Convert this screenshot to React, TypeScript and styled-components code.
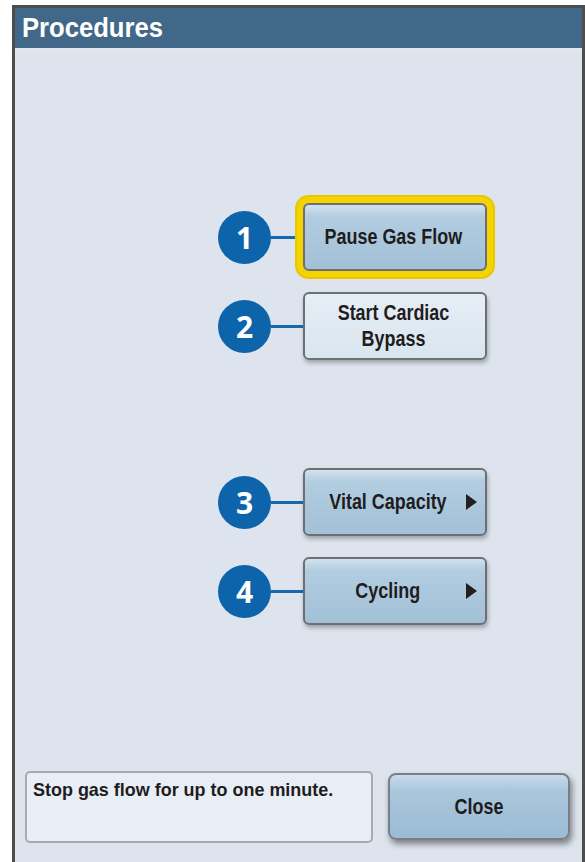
import React from 'react'
import styled, { createGlobalStyle } from 'styled-components'

const GlobalStyle = createGlobalStyle`
  html, body {
    margin: 0;
    padding: 0;
    background: #ffffff;
    overflow: hidden;
  }
  body {
    font-family: "Liberation Sans", Arial, sans-serif;
  }
`

// the device font is a condensed helvetica, squeeze liberation sans to match
const Condensed = styled.span<{ $scale: number }>`
  display: inline-block;
  transform: scaleX(${({ $scale }) => $scale});
  transform-origin: ${({ $scale }) => ($scale > 0.9 ? 'left center' : 'center center')};
  white-space: nowrap;
`

const Frame = styled.div`
  margin: 5px 0 0 12px;
  width: 573px;
  height: 880px;
  box-sizing: border-box;
  border: 3px solid #4d4d4d;
  border-bottom: none;
  background: #dde4ed;
  display: flex;
  flex-direction: column;
`

const Header = styled.div`
  height: 43px;
  box-sizing: border-box;
  background: #426889;
  border-bottom: 3px solid #e3e7ec;
  display: flex;
  align-items: center;
  padding: 0 0 0 7px;
  color: #ffffff;
  font-size: 28px;
  font-weight: 700;
`

const Content = styled.div`
  display: flex;
  flex-direction: column;
  padding: 152px 0 0 203px;
`

const Row = styled.div<{ $gap: number }>`
  display: flex;
  align-items: center;
  margin-top: ${({ $gap }) => $gap}px;
`

const Badge = styled.div`
  width: 53px;
  height: 53px;
  border-radius: 50%;
  background: #0d64ab;
  color: #ffffff;
  display: flex;
  align-items: center;
  justify-content: center;
  font-family: "Open Sans", "Liberation Sans", sans-serif;
  font-size: 30px;
  font-weight: 700;
  flex-shrink: 0;
`

const Connector = styled.div`
  width: 32px;
  height: 3px;
  background: #1769ad;
  flex-shrink: 0;
`

const OptionButton = styled.button<{ $active?: boolean; $light?: boolean }>`
  width: 184px;
  height: 68px;
  box-sizing: border-box;
  border: 2px solid #6d6f72;
  border-radius: 6px;
  padding: 0 8px 0 4px;
  display: flex;
  align-items: center;
  background: ${({ $light }) =>
    $light
      ? 'linear-gradient(#e6eef5, #d9e5ef)'
      : 'linear-gradient(#d2e2ee 0%, #b2cde0 18%, #a2c0d7 100%)'};
  box-shadow: ${({ $active }) =>
    $active
      ? '0 0 0 6px #f4d300, 0 0 0 8px #e8c600'
      : '1px 3px 4px rgba(0, 0, 0, 0.28)'};
  color: #1f1c1d;
  font-family: inherit;
  font-size: 22px;
  font-weight: 700;
  line-height: 26px;
  cursor: pointer;
`

const Label = styled.span`
  flex: 1;
  text-align: center;
`

const Arrow = styled.span`
  width: 0;
  height: 0;
  border-top: 8.5px solid transparent;
  border-bottom: 8.5px solid transparent;
  border-left: 11px solid #231f20;
  flex-shrink: 0;
`

const Footer = styled.div`
  display: flex;
  align-items: flex-start;
  gap: 15px;
  margin-top: 146px;
  padding-left: 10px;
`

const Description = styled.div`
  width: 348px;
  height: 72px;
  box-sizing: border-box;
  border: 2px solid #a7abaf;
  border-radius: 5px;
  background: #e8eef5;
  padding: 6px 6px;
  color: #1f1c1d;
  font-size: 19px;
  font-weight: 700;
  line-height: 22px;
`

const CloseButton = styled.button`
  width: 182px;
  height: 67px;
  margin-top: 2px;
  box-sizing: border-box;
  border: 2px solid #7b7f84;
  border-radius: 8px;
  background: linear-gradient(#c8dcea 0%, #a9c6dc 25%, #9bbcd5 100%);
  box-shadow: 2px 4px 6px rgba(0, 0, 0, 0.45);
  color: #1f1c1d;
  font-family: inherit;
  font-size: 22px;
  font-weight: 700;
  padding: 0;
  cursor: pointer;
`

interface Option {
  num: number
  label: React.ReactNode
  gap: number
  active?: boolean
  light?: boolean
  submenu?: boolean
}

const options: Option[] = [
  { num: 1, label: 'Pause Gas Flow', gap: 0, active: true },
  { num: 2, label: <>Start Cardiac<br />Bypass</>, gap: 21, light: true },
  { num: 3, label: 'Vital Capacity', gap: 108, submenu: true },
  { num: 4, label: 'Cycling', gap: 21, submenu: true },
]

export default function App() {
  return (
    <>
      <GlobalStyle />
      <Frame>
        <Header>
          <Condensed $scale={0.915}>Procedures</Condensed>
        </Header>
        <Content>
          {options.map((opt) => (
            <Row key={opt.num} $gap={opt.gap}>
              <Badge>{opt.num}</Badge>
              <Connector />
              <OptionButton $active={opt.active} $light={opt.light}>
                <Label>
                  <Condensed $scale={0.815}>{opt.label}</Condensed>
                </Label>
                {opt.submenu && <Arrow />}
              </OptionButton>
            </Row>
          ))}
        </Content>
        <Footer>
          <Description>
            <Condensed $scale={0.945}>Stop gas flow for up to one minute.</Condensed>
          </Description>
          <CloseButton>
            <Condensed $scale={0.815}>Close</Condensed>
          </CloseButton>
        </Footer>
      </Frame>
    </>
  )
}
